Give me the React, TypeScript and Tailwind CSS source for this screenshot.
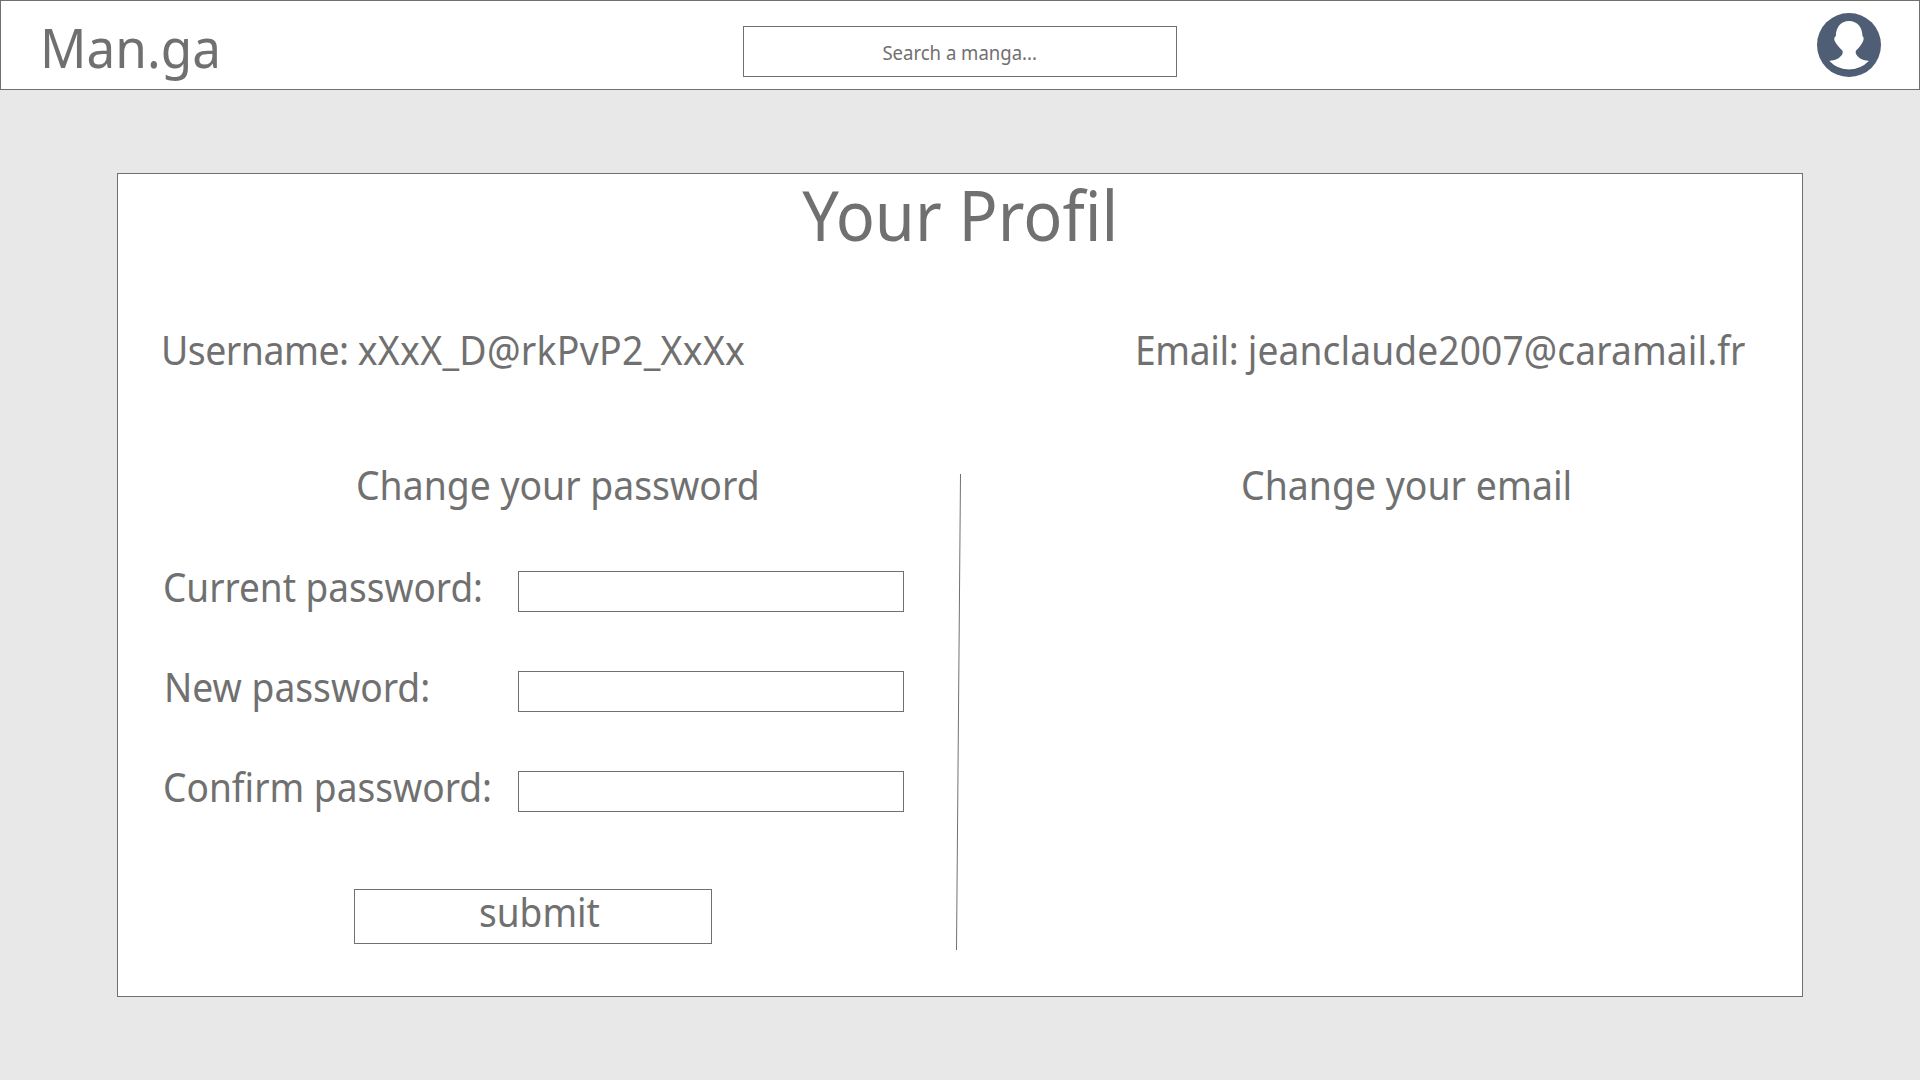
const FIELDS = [
  { label: "Current password:", fit: "ml-[45px] scale-x-[0.943]" },
  { label: "New password:", fit: "ml-[46px] scale-x-[0.95]" },
  { label: "Confirm password:", fit: "ml-[45px] scale-x-[0.947]" },
];

const BODY = "block w-max origin-left whitespace-nowrap text-[39.2px] leading-[40px]";

function Avatar() {
  return (
    <svg viewBox="0 0 64 64" className="mt-3 mr-[38px] size-16">
      <circle cx="32" cy="32" r="32" fill="#4f5e74" />
      <path d="M12.500 49 Q21 57.600 32 57.600 Q43 57.600 51.500 49 L40 44 L24 44Z" fill="#435167" />
      <path
        d="M32 8 C40.500 8 45.300 14.500 45.500 23 Q47.300 24.500 46.500 27 C45 31.500 42.500 34 39.300 37.300 Q38 39 39 41 C42 46 46 47 51.900 48 Q43.500 56.500 32 56.500 Q20.500 56.500 12.300 48 C18 47 22.500 46 25.400 41 Q26.400 39 25.100 37.300 C22 34 19 31.500 17.300 27 Q16.700 24.500 18.800 23 C19 14.500 23.500 8 32 8Z"
        fill="#ffffff"
      />
    </svg>
  );
}

export default function App() {
  return (
    <div className="h-[1080px] w-[1920px] overflow-hidden bg-[#e8e8e8] font-['Noto_Sans',sans-serif] text-[#707070]">
      <header className="flex h-[90px] items-start border border-[#707070] bg-white">
        <div className="flex-1">
          <span className="mt-4 ml-[39px] block w-max origin-left scale-x-[0.934] text-[54.9px] leading-[60px]">
            Man.ga
          </span>
        </div>
        <div className="mt-[25px] flex h-[51px] w-[434px] justify-center border border-[#707070] pt-[14px]">
          <span className="block h-6 scale-x-[0.946] text-[19.6px] leading-6 whitespace-nowrap">Search a manga...</span>
        </div>
        <div className="flex flex-1 justify-end">
          <Avatar />
        </div>
      </header>

      <main className="mx-[117px] mt-[83px] h-[824px] border border-[#707070] bg-white">
        <h1 className="mx-auto w-max scale-x-[0.945] pt-px text-[68.6px] leading-[80px] whitespace-nowrap">Your Profil</h1>

        <div className="mt-[75px] grid h-10 grid-cols-2">
          <div>
            <span className={`${BODY} ml-[42.5px] scale-x-[0.955]`}>
              <span className="tracking-[-0.53px]">Username: </span>
              <span className="tracking-[0.3px]">xXxX_D@rkPvP2_XxXx</span>
            </span>
          </div>
          <div>
            <span className={`${BODY} ml-[175px] scale-x-[0.948]`}>
              <span className="tracking-[-0.35px]">Email: </span>
              <span className="tracking-[0.13px]">jeanclaude2007@caramail.fr</span>
            </span>
          </div>
        </div>

        <div className="mt-[95px] flex items-start">
          <section className="w-[838px]">
            <h2 className={`${BODY} ml-[237.7px] scale-x-[0.953]`}>Change your password</h2>
            <div className="mt-[66px] flex flex-col gap-[59px]">
              {FIELDS.map(({ label, fit }) => (
                <div key={label} className="flex h-[41px] items-start">
                  <div className="-mt-1 w-[400px]">
                    <span className={`${BODY} ${fit}`}>{label}</span>
                  </div>
                  <div className="h-[41px] w-[386px] border border-[#707070]" />
                </div>
              ))}
            </div>
            <div className="mt-[77px] ml-[236px] h-[55px] w-[358px] border border-[#707070]">
              <span className="ml-[124px] block w-max origin-left scale-x-[0.945] text-[39.2px] leading-[44px]">submit</span>
            </div>
          </section>
          <svg viewBox="0 0 6 476" className="mt-[9px] h-[476px] w-[6px]">
            <line x1="4.5" y1="0" x2="0.5" y2="476" stroke="#707070" />
          </svg>
          <section>
            <h2 className={`${BODY} ml-[278.7px] scale-x-[0.955]`}>Change your email</h2>
          </section>
        </div>
      </main>
    </div>
  );
}
